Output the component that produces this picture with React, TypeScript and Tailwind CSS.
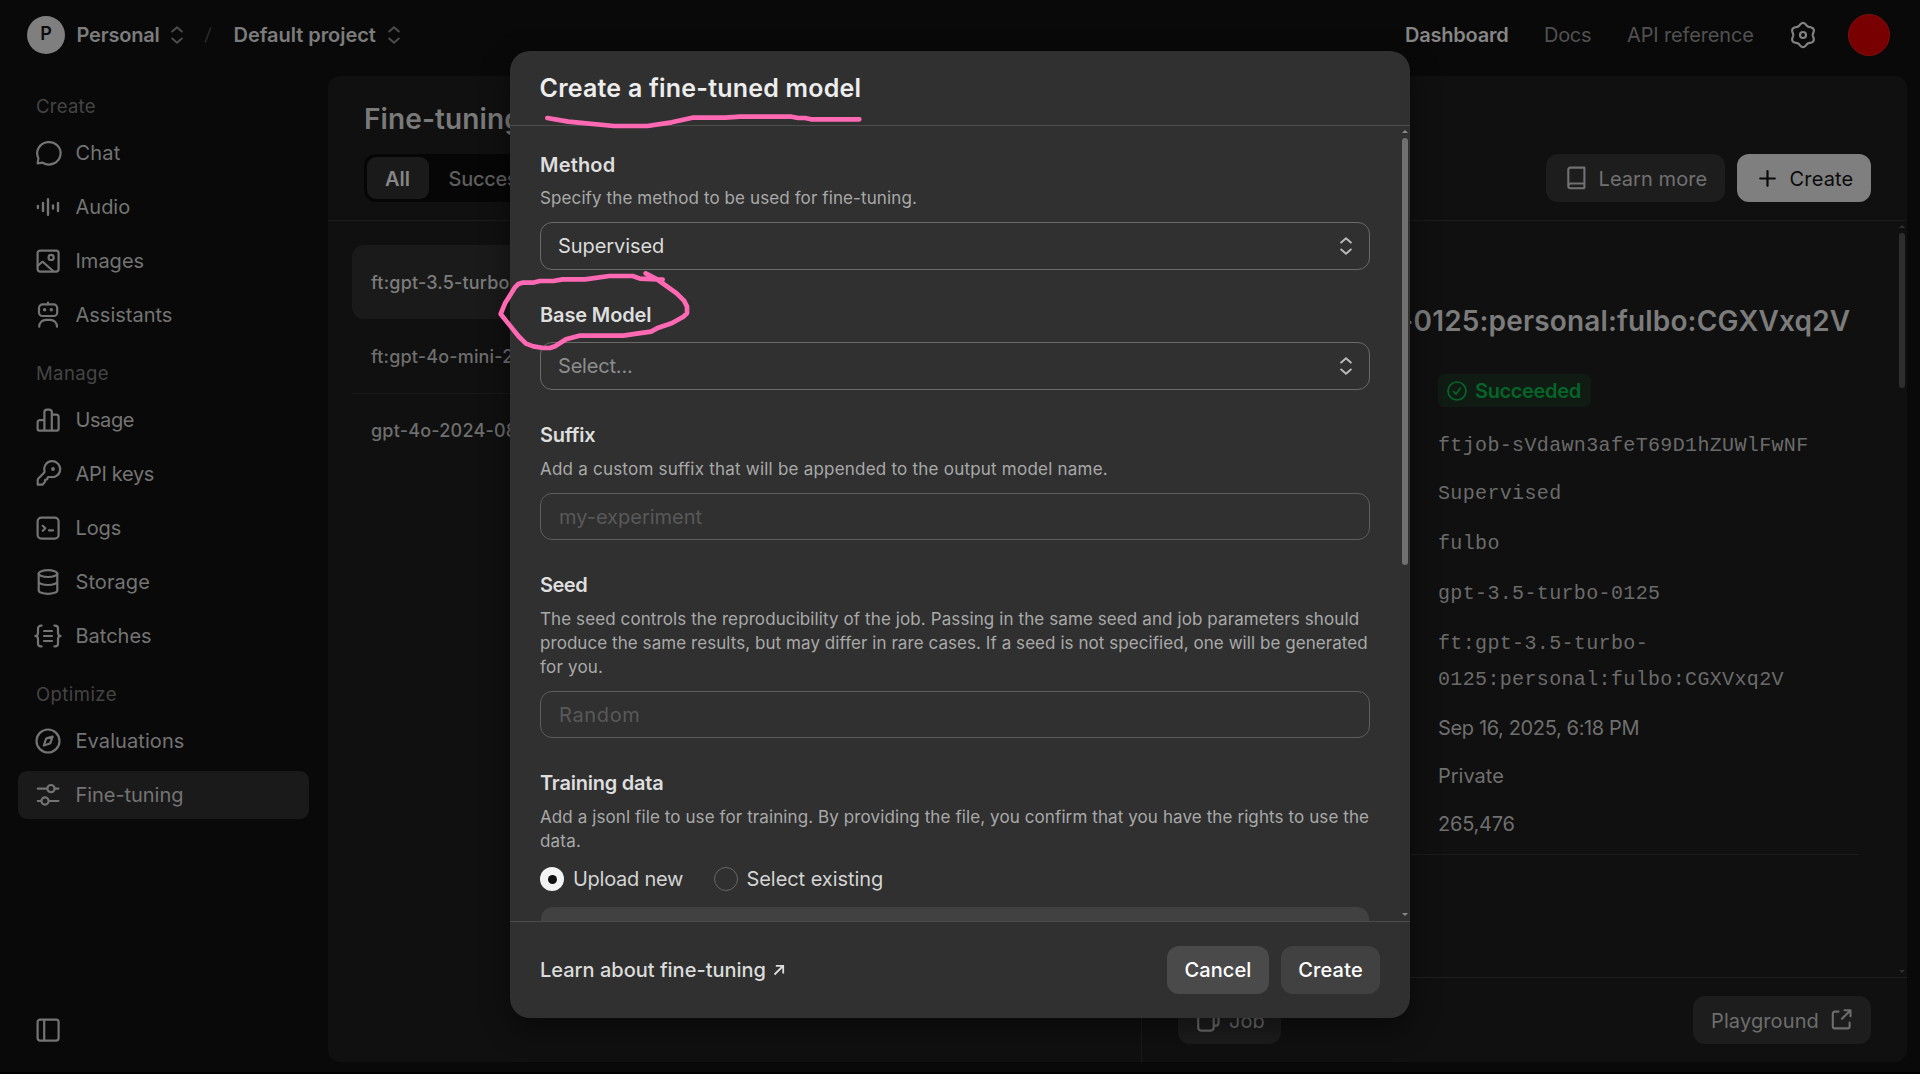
import React from 'react';

type IconProps = { children: React.ReactNode; className?: string };

function Icon({ children, className = '' }: IconProps) {
  return (
    <svg
      width="26"
      height="26"
      viewBox="0 0 26 26"
      fill="none"
      stroke="currentColor"
      strokeWidth="2.2"
      strokeLinecap="round"
      strokeLinejoin="round"
      className={`shrink-0 overflow-visible ${className}`}
    >
      {children}
    </svg>
  );
}

const icons = {
  chat: <path d="M7.6 22.7A11.7 11.2 0 1 0 3.4 18.2L2.6 23.3Z" />,
  audio: (
    <path strokeWidth="2.4" d="M2.9 11.9v2.2M8 9v8M13 5.2v15.6M18 11.5v3M23 9v8" />
  ),
  images: (
    <>
      <rect x="2.6" y="2.6" width="21" height="21" rx="2.5" />
      <circle cx="16.1" cy="9.4" r="2.6" />
      <path d="M2.8 17.8l4-3.6c.5-.4 1-.4 1.500 0l10 9" />
    </>
  ),
  assistants: (
    <>
      <rect x="4" y="2.4" width="18.2" height="11.6" rx="3.6" />
      <path d="M13 .6v1.6M4.2 24.7c0-4 3-6.9 7-6.9h3.8c4 0 7 2.9 7 6.9" />
      <circle cx="9.6" cy="7.7" r="1.7" fill="currentColor" stroke="none" />
      <circle cx="16.3" cy="7.7" r="1.7" fill="currentColor" stroke="none" />
    </>
  ),
  usage: (
    <path d="M9.4 23.5V5.2a2.6 2.6 0 0 1 2.6-2.6h2.2a2.6 2.6 0 0 1 2.6 2.6v18.3M9.4 13.2H4.8a2.2 2.2 0 0 0-2.2 2.2v6.4c0 1 .8 1.8 1.8 1.8h17.4c1 0 1.8-.8 1.8-1.8V10a2.4 2.4 0 0 0-2.4-2.4h-4.4" />
  ),
  keys: (
    <>
      <path d="M9.5 10.4A8 8 0 1 1 15.7 16h-2.2c-.6 0-1 .4-1 1v.6c0 .6-.4 1-1 1h-.5c-.6 0-1 .4-1 1v1.2l-2.2 2.6c-.2.2-.5.3-.8.3H2.7v-4.3c0-.8.3-1.5.9-2.1l5-5c.7-.7.9-1.3.9-1.9z" />
      <circle cx="18" cy="8" r="1.9" fill="currentColor" stroke="none" />
    </>
  ),
  logs: (
    <>
      <rect x="2.6" y="2.6" width="21" height="21" rx="3.8" />
      <path d="M7.8 10.8l2.5 2.5-2.5 2.5M14 15.4h4" />
    </>
  ),
  storage: (
    <>
      <ellipse cx="13" cy="4.6" rx="9.3" ry="3.4" />
      <path d="M3.7 4.6v16.800c0 1.900 4.200 3.400 9.300 3.400s9.300-1.500 9.300-3.400V4.600M3.700 12.600c0 1.900 4.200 3.400 9.300 3.400s9.300-1.500 9.300-3.400" />
    </>
  ),
  batches: (
    <path d="M6.6 2.6H6A3 3 0 0 0 3 5.6v4.2c0 1.8-.9 3.2-2.6 3.2C2.1 13 3 14.4 3 16.2v4.2a3 3 0 0 0 3 3h.6M19.4 2.6h.6a3 3 0 0 1 3 3v4.2c0 1.8.9 3.2 2.6 3.2-1.7 0-2.6 1.4-2.6 3.2v4.2a3 3 0 0 1-3 3h-.6M9 8h8M9 13h8M9 18h8" />
  ),
  evaluations: (
    <>
      <circle cx="13" cy="13" r="11.5" />
      <path d="M17.6 8.6l-5.4 1.5c-.7.2-1.2.7-1.4 1.4l-2 6 5.4-1.7c.7-.2 1.2-.7 1.4-1.4z" />
    </>
  ),
  tuning: (
    <>
      <path d="M2.8 6.6h9.4M19.8 6.6h3.6M2.8 19h3.4M13.8 19h9.6" />
      <circle cx="16" cy="6.6" r="3.6" />
      <circle cx="10" cy="19" r="3.6" />
    </>
  ),
  panel: (
    <>
      <rect x="2.6" y="2.6" width="21" height="21" rx="2.5" />
      <path d="M9.2 3v20" />
    </>
  ),
};

function UpDown({ className = '' }: { className?: string }) {
  return (
    <svg
      width="12"
      height="18"
      viewBox="0 0 12 18"
      fill="none"
      stroke="currentColor"
      strokeWidth="2"
      strokeLinecap="round"
      strokeLinejoin="round"
      className={`shrink-0 ${className}`}
    >
      <path d="M1.2 5.5L6 1.3l4.8 4.2M1.2 12.5L6 16.7l4.8-4.2" />
    </svg>
  );
}

const gearPath =
  Array.from({ length: 120 }, (_, i) => {
    const a = (i / 120) * Math.PI * 2;
    const r = 10.9 + 1.15 * Math.cos(6 * a);
    return `${i === 0 ? 'M' : 'L'}${(13 + r * Math.sin(a)).toFixed(2)} ${(13 - r * Math.cos(a)).toFixed(2)}`;
  }).join('') + 'Z';

type NavItem = { icon: keyof typeof icons; label: string; tracking: string; active?: boolean };
type NavGroup = { title: string; tracking: string; items: NavItem[] };

const nav: NavGroup[] = [
  {
    title: 'Create',
    tracking: 'tracking-[0.26px]',
    items: [
      { icon: 'chat', label: 'Chat', tracking: 'tracking-[0.2px]' },
      { icon: 'audio', label: 'Audio', tracking: 'tracking-normal' },
      { icon: 'images', label: 'Images', tracking: 'tracking-normal' },
      { icon: 'assistants', label: 'Assistants', tracking: 'tracking-normal' },
    ],
  },
  {
    title: 'Manage',
    tracking: 'tracking-[0.39px]',
    items: [
      { icon: 'usage', label: 'Usage', tracking: 'tracking-[-0.41px]' },
      { icon: 'keys', label: 'API keys', tracking: 'tracking-[-0.33px]' },
      { icon: 'logs', label: 'Logs', tracking: 'tracking-[-0.09px]' },
      { icon: 'storage', label: 'Storage', tracking: 'tracking-[0.08px]' },
      { icon: 'batches', label: 'Batches', tracking: 'tracking-normal' },
    ],
  },
  {
    title: 'Optimize',
    tracking: 'tracking-[0.44px]',
    items: [
      { icon: 'evaluations', label: 'Evaluations', tracking: 'tracking-[0.08px]' },
      { icon: 'tuning', label: 'Fine-tuning', tracking: 'tracking-[-0.05px]', active: true },
    ],
  },
];

function Header() {
  return (
    <header className="flex h-[76px] shrink-0 items-start justify-between pl-[27px] pr-[30px] text-[#7c7c7c]">
      <div className="flex h-[70px] items-center">
        <div className="flex size-[38px] items-center justify-center rounded-full bg-[#7f7f7f] pb-[3px] text-[18px] font-semibold text-[#0c0c0c]">
          P
        </div>
        <span className="ml-[11.5px] w-[94.5px] font-semibold tracking-[-0.2px]">Personal</span>
        <UpDown className="text-[#4c4c4c]" />
        <svg width="10" height="18" viewBox="0 0 10 18" stroke="#2a2a2a" strokeWidth="1.6" className="ml-[20px]">
          <path d="M2.2 16.5L7.8 1.5" />
        </svg>
        <span className="ml-[20.5px] w-[154.5px] font-semibold tracking-[-0.04px]">Default project</span>
        <UpDown className="text-[#4c4c4c]" />
      </div>
      <div className="flex h-[70px] items-center">
        <span className="w-[139px] font-semibold tracking-[-0.21px] text-[#868686]">Dashboard</span>
        <span className="w-[83px] tracking-[-0.28px] text-[#515151]">Docs</span>
        <span className="w-[163px] tracking-[-0.15px] text-[#515151]">API reference</span>
        <Icon className="text-[#828282]">
          <path d={gearPath} />
          <circle cx="13" cy="13" r="3" />
        </Icon>
        <div className="ml-[32px] size-[42px] rounded-full border border-[#7d0f0f] bg-[#780000]" />
      </div>
    </header>
  );
}

function Sidebar() {
  return (
    <nav className="flex w-[328px] shrink-0 flex-col pl-[18px] pr-[19px] text-[#747474]">
      <div className="-mt-[4px] flex flex-1 flex-col">
        {nav.map((g) => (
          <div key={g.title}>
            <div className={`flex h-[57px] items-center pl-[18px] pt-[10.5px] text-[18.5px] text-[#454545] ${g.tracking}`}>
              {g.title}
            </div>
            <div className="flex flex-col gap-[6px]">
              {g.items.map((it) => (
                <div
                  key={it.label}
                  className={`flex h-[48px] items-center gap-[14.5px] rounded-[9px] pl-[17px] ${it.active ? 'bg-[#1a1a1a]' : ''}`}
                >
                  <Icon>{icons[it.icon]}</Icon>
                  <span className={it.tracking}>{it.label}</span>
                </div>
              ))}
            </div>
          </div>
        ))}
      </div>
      <div className="pb-[29px] pl-[17px]">
        <Icon>{icons.panel}</Icon>
      </div>
    </nav>
  );
}

function Caret({ down = false, className = '' }: { down?: boolean; className?: string }) {
  return (
    <svg width="6" height="3" viewBox="0 0 6 3" fill="currentColor" className={className}>
      <path d={down ? 'M0 0h6L3 3z' : 'M0 3h6L3 0z'} />
    </svg>
  );
}

function Detail() {
  return (
    <div className="flex flex-1 flex-col border-l border-[#1b1b1b]">
      <div className="flex h-[756px]">
        <div className="flex flex-1 flex-col pl-[36px]">
          <h2 className="mt-[82px] h-[36px] whitespace-nowrap pl-[4.5px] text-[28px] font-semibold leading-[36px] tracking-[0.15px] text-[#7c7c7c]">
            ft:gpt-3.5-turbo-0125:personal:fulbo:CGXVxq2V
          </h2>
          <div className="mt-[35px] ml-[260px] flex flex-col items-start">
            <div className="flex h-[33px] items-center gap-[8px] rounded-[6px] bg-[#101b14] pl-[9px] pr-[10px] text-[#056529]">
              <svg width="20" height="20" viewBox="0 0 20 20" fill="none" stroke="currentColor" strokeWidth="1.7" strokeLinecap="round" strokeLinejoin="round">
                <circle cx="10" cy="10" r="9" />
                <path d="M6.6 10.700l2.400 2.500 4.300-6" />
              </svg>
              <span className="font-semibold tracking-[-0.36px]">Succeeded</span>
            </div>
            <div className="tracking-[0.35px] text-[#6b6b6b]" style={{ fontFamily: '"Liberation Mono", monospace' }}>
              <div className="mt-[21px] h-[36px] leading-[36px]">ftjob-sVdawn3afeT69D1hZUWlFwNF</div>
              <div className="mt-[12px] h-[36px] leading-[36px]">Supervised</div>
              <div className="mt-[14px] h-[36px] leading-[36px]">fulbo</div>
              <div className="mt-[14px] h-[36px] leading-[36px]">gpt-3.5-turbo-0125</div>
              <div className="mt-[14px] h-[72px] leading-[36px]">
                ft:gpt-3.5-turbo-
                <br />
                0125:personal:fulbo:CGXVxq2V
              </div>
            </div>
            <div className="mt-[6px] text-[#6f6f6f]">
              <div className="h-[48px] leading-[48px] tracking-[-0.36px]">Sep 16, 2025, 6:18 PM</div>
              <div className="h-[48px] leading-[48px]">Private</div>
              <div className="h-[48px] leading-[48px] tracking-[-0.22px]">265,476</div>
            </div>
          </div>
          <div className="mt-[6px] mr-[34px] h-px bg-[#1b1b1b]" />
        </div>
        <div className="flex w-[14px] flex-col items-end pr-[2px] text-[#303030]">
          <Caret className="mt-[4px]" />
          <div className="mt-[5px] h-[155px] w-[6px] rounded-full bg-[#2e2e2e]" />
          <Caret down className="mt-auto mb-[4px]" />
        </div>
      </div>
      <div className="flex flex-1 items-center justify-between border-t border-[#1f1f1f] pl-[36px] pr-[36px] text-[#6d6d6d]">
        <div className="flex h-[48px] w-[103px] items-center rounded-[12px] bg-[#1d1d1d] pl-[18px]">
          <Icon className="mt-[2px]">
            <rect x="2.2" y="7" width="15.5" height="15.6" rx="3" />
            <path d="M8 7V4.500a2 2 0 0 1 2-2h10.500a2 2 0 0 1 2 2V15c0 1.600-1 2.600-2.600 2.600h-2" />
          </Icon>
          <span className="ml-[7px] mt-px">Job</span>
        </div>
        <div className="flex h-[48px] w-[178px] items-center rounded-[12px] bg-[#1d1d1d] pl-[18px]">
          <span className="mt-px w-[120px] tracking-[0.12px]">Playground</span>
          <svg width="21" height="21" viewBox="0 0 21 21" fill="none" stroke="currentColor" strokeWidth="2.1" strokeLinecap="round" strokeLinejoin="round" className="mb-[1px]">
            <path d="M7.5 2.6H3.6A1.8 1.8 0 0 0 1.8 4.4v13.200c0 1 .8 1.800 1.800 1.800h13.200c1 0 1.800-.8 1.800-1.800v-4M13.500 1.300h6v6M19.200 1.600L11 9.800" />
          </svg>
        </div>
      </div>
    </div>
  );
}

function Main() {
  return (
    <main className="mr-[13px] flex h-[986px] flex-1 flex-col overflow-hidden rounded-[12px] bg-[#101010]">
      <div className="flex h-[145px] shrink-0 flex-col border-b border-[#1b1b1b] pl-[36px] pr-[36px]">
        <h1 className="mt-[25px] h-[36px] text-[28px] font-semibold leading-[36px] tracking-[0.11px] text-[#7a7a7a]">
          Fine-tuning
        </h1>
        <div className="mt-[17px] flex items-center justify-between">
          <div className="flex h-[48px] w-[420px] items-center rounded-[12px] bg-[#060606] p-[3px]">
            <div className="flex h-[42px] w-[62px] items-center justify-center rounded-[9px] bg-[#1a1a1a] pt-px pr-px font-semibold text-[#868686]">
              All
            </div>
            <span className="ml-[19.5px] mt-px w-[115px] font-medium tracking-[-0.26px] text-[#5e5e5e]">Successful</span>
            <span className="ml-[20px] mt-px font-medium text-[#5e5e5e]">Failed</span>
          </div>
          <div className="flex gap-[12px]">
            <div className="flex h-[48px] w-[179px] items-center rounded-[12px] bg-[#1d1d1d] pl-[20px] text-[#717171]">
              <svg width="20" height="24" viewBox="0 0 20 24" fill="none" stroke="currentColor" strokeWidth="2.1" strokeLinejoin="round">
                <path d="M2.3 20.2V3.6c0-1.200.8-2 2-2h14.100v15.900H4.600a2.500 2.500 0 0 0-2.300 2.600c0 1.300 1 2.200 2.300 2.200h14.200M18.400 17.500v4.600" />
              </svg>
              <span className="ml-[12.5px] mt-px tracking-[0.07px]">Learn more</span>
            </div>
            <div className="flex h-[48px] w-[134px] items-center rounded-[12px] bg-[#7f7f7f] pl-[22px] text-[#0b0b0b]">
              <svg width="17" height="17" viewBox="0 0 17 17" stroke="currentColor" strokeWidth="2.2" strokeLinecap="round">
                <path d="M8.5 1.200v14.600M1.200 8.500h14.600" />
              </svg>
              <span className="ml-[13.5px] mt-px tracking-[0.17px]">Create</span>
            </div>
          </div>
        </div>
      </div>
      <div className="flex min-h-0 flex-1">
        <div className="flex w-[813px] flex-col px-[24px] pt-[24px] text-[18px] font-medium text-[#6e6e6e]">
          <div className="flex h-[74px] items-center rounded-[12px] bg-[#1a1a1a] pl-[19px] pt-px tracking-[0.18px] text-[#7c7c7c]">
            ft:gpt-3.5-turbo-0125:personal:fulbo
          </div>
          <div className="flex h-[75px] items-center border-b border-[#191919] pl-[19px] pt-px tracking-[0.16px]">
            ft:gpt-4o-mini-2024-07-18:personal
          </div>
          <div className="flex h-[73px] items-center pl-[19px] tracking-[0.2px]">gpt-4o-2024-08-06</div>
        </div>
        <Detail />
      </div>
    </main>
  );
}

function Label({ children, className = '' }: { children: React.ReactNode; className?: string }) {
  return <div className={`h-[28px] shrink-0 font-semibold leading-[28px] text-[#dedede] ${className}`}>{children}</div>;
}

function Line({ children, className = '' }: { children: React.ReactNode; className?: string }) {
  return (
    <div className={`h-[24px] shrink-0 whitespace-nowrap text-[17px] leading-[24px] text-[#a9a9a9] ${className}`}>{children}</div>
  );
}

function Select({ children, className = '' }: { children: React.ReactNode; className?: string }) {
  return (
    <div className={`flex h-[48px] shrink-0 items-center justify-between rounded-[12px] border border-[#6a6a6a] pl-[17px] pr-[17px] ${className}`}>
      {children}
      <UpDown className="text-[#b8b8b8]" />
    </div>
  );
}

function Field({ children, className = '' }: { children: React.ReactNode; className?: string }) {
  return (
    <div className={`flex h-[47px] shrink-0 items-center rounded-[12px] border border-[#5d5d5d] pl-[18px] pt-px text-[#595959] ${className}`}>
      {children}
    </div>
  );
}

function Modal() {
  return (
    <div className="absolute left-[510px] top-[51px] flex h-[967px] w-[900px] flex-col overflow-hidden rounded-[20px] bg-[#303030] shadow-[0_10px_30px_rgba(0,0,0,0.45)]">
      <div className="flex h-[75px] shrink-0 items-center border-b border-[#4c4c4c] pl-[29.5px] text-[25px] font-semibold tracking-[0.22px] text-[#ededed]">
        Create a fine-tuned model
      </div>
      <div className="flex h-[795px] shrink-0 overflow-hidden">
        <div className="flex w-[890px] shrink-0 flex-col pl-[30px] pr-[30px] pt-[25px]">
          <Label className="tracking-[0.18px]">Method</Label>
          <Line className="mt-[7px] tracking-[0.11px]">Specify the method to be used for fine-tuning.</Line>
          <Select className="mt-[12px] text-[#dcdcdc]">
            <span className="tracking-[-0.08px]">Supervised</span>
          </Select>

          <Label className="mt-[31px] tracking-[-0.13px]">Base Model</Label>
          <Select className="mt-[13px] text-[#8d8d8d]">
            <span className="tracking-[-0.19px]">Select...</span>
          </Select>

          <Label className="mt-[31px] tracking-[-0.21px]">Suffix</Label>
          <Line className="mt-[8px] tracking-[0.22px]">
            Add a custom suffix that will be appended to the output model name.
          </Line>
          <Field className="mt-[12px]">my-experiment</Field>

          <Label className="mt-[31px] tracking-[-0.5px]">Seed</Label>
          <Line className="mt-[8px] tracking-[0.1px]">
            The seed controls the reproducibility of the job. Passing in the same seed and job parameters should
          </Line>
          <Line className="tracking-[0.06px]">
            produce the same results, but may differ in rare cases. If a seed is not specified, one will be generated
          </Line>
          <Line className="tracking-[0.2px]">for you.</Line>
          <Field className="mt-[12px] tracking-[0.65px]">Random</Field>

          <Label className="mt-[31px] tracking-[-0.22px]">Training data</Label>
          <Line className="mt-[8px] tracking-[0.1px]">
            Add a jsonl file to use for training. By providing the file, you confirm that you have the rights to use the
          </Line>
          <Line className="tracking-[0.2px]">data.</Line>
          <div className="mt-[14px] flex h-[24px] shrink-0 items-center text-[#d4d4d4]">
            <span className="flex size-[24px] items-center justify-center rounded-full bg-[#f3f3f3]">
              <span className="size-[9px] rounded-full bg-[#101010]" />
            </span>
            <span className="ml-[9px] w-[141px] tracking-[-0.26px]">Upload new</span>
            <span className="size-[24px] rounded-full border border-[#666666]" />
            <span className="ml-[8.5px] tracking-[-0.06px]">Select existing</span>
          </div>
          <div className="mx-px mt-[16px] h-[60px] shrink-0 rounded-[12px] bg-[#414141]" />
        </div>
        <div className="flex w-[10px] flex-col items-center text-[#8a8a8a]">
          <Caret className="mt-[4px]" />
          <div className="mt-[5px] h-[427px] w-[6px] rounded-full bg-[#707070]" />
          <Caret down className="mt-auto mb-[5px]" />
        </div>
      </div>
      <div className="flex flex-1 items-center border-t border-[#4c4c4c] pl-[30px] pr-[30px]">
        <span className="font-medium tracking-normal text-[#dcdcdc]">Learn about fine-tuning</span>
        <svg width="12" height="12" viewBox="0 0 12 12" fill="none" stroke="#dcdcdc" strokeWidth="1.8" className="ml-[7.5px]">
          <path d="M2.8 1.8h7.400v7.600M10 2L1.500 10.500" />
        </svg>
        <div className="ml-auto flex gap-[12px] font-medium text-white">
          <div className="flex h-[48px] w-[102px] items-center justify-center rounded-[12px] bg-[#4a4a4a] tracking-[0.09px]">Cancel</div>
          <div className="flex h-[48px] w-[99px] items-center justify-center rounded-[12px] bg-[#414141] tracking-[0.17px]">Create</div>
        </div>
      </div>
    </div>
  );
}

function Markup() {
  return (
    <svg
      width="520"
      height="360"
      viewBox="0 0 1560 1080"
      fill="none"
      stroke="#ff69b4"
      strokeWidth="14"
      strokeLinecap="round"
      strokeLinejoin="round"
      className="pointer-events-none absolute left-[490px] top-[40px]"
    >
      <path d="M172 234L235 245L372 258H472L545 247L607 233H705L750 230H905L925 234H945L963 238H1108" />
      <path d="M467 700L500 717L560 760L582 782L591 800V820L580 830L545 850L505 863L483 875L440 881L400 887H268L228 898L195 919L180 924H160L130 919L108 911L85 888L32 822L45 790L75 742L85 732L97 728H128L150 723H190L218 718H285L358 708H428L450 716L518 719" />
    </svg>
  );
}

export default function App() {
  return (
    <div
      className="relative flex h-[1074px] w-[1920px] flex-col overflow-hidden border-b-2 border-black bg-[#090909] text-[20px] leading-[28px]"
      style={{ fontFamily: 'Inter, "Liberation Sans", sans-serif' }}
    >
      <Header />
      <div className="flex min-h-0 flex-1">
        <Sidebar />
        <Main />
      </div>
      <Modal />
      <Markup />
    </div>
  );
}
